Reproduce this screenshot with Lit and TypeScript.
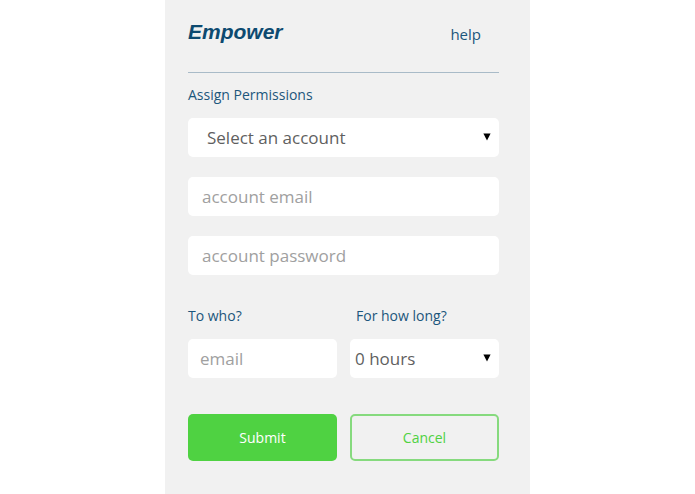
import { LitElement, html, css } from "lit";
import { customElement, state } from "lit/decorators.js";

const arrow = html`
    <svg class="arrow" viewBox="0 0 8 8" aria-hidden="true">
        <path d="M0.4 0.5h7.2L4 7.6z" fill="#000" />
    </svg>
`;

@customElement("app-root")
export class AppRoot extends LitElement {
    static styles = css`
        :host {
            display: block;
            min-height: 100vh;
            background: #fff;
            color: #1c567c;
            font-family: "Open Sans", "Noto Sans", sans-serif;
            font-size: 14px;
            line-height: 20px;
        }
        * {
            box-sizing: border-box;
        }
        .panel {
            max-width: 365px;
            min-height: 100vh;
            margin: 0 auto;
            padding: 19px 31px 32px 23px;
            background: #f1f1f1;
        }
        header {
            display: flex;
            align-items: center;
            justify-content: space-between;
            padding-bottom: 28px;
            border-bottom: 1px solid #a9bbc8;
        }
        h1 {
            margin: 0;
            color: #0d4a70;
            font: italic bold 21px/24px "Liberation Sans", Arial, sans-serif;
        }
        .help {
            padding: 5px 18px 0 0;
            color: inherit;
            font-size: 15px;
            text-decoration: none;
        }
        form {
            display: grid;
            grid-template-columns: 1fr 1fr;
            column-gap: 13px;
        }
        .wide {
            grid-column: 1 / -1;
        }
        label {
            display: block;
        }
        .title {
            padding: 12px 0 13px;
        }
        .field {
            padding: 0 0 13px;
        }
        .indent {
            padding-left: 6px;
        }
        .accounts {
            display: grid;
            gap: 20px;
            margin-bottom: 31px;
        }
        .select {
            display: flex;
            align-items: center;
            position: relative;
        }
        .arrow {
            position: absolute;
            right: 8px;
            width: 8px;
            height: 8px;
            margin-bottom: 1px;
            pointer-events: none;
        }
        input,
        select {
            display: block;
            width: 100%;
            height: 39px;
            margin: 0;
            border: 0;
            border-radius: 5px;
            background: #fff;
            color: #5f5f5f;
            font: inherit;
            font-size: 17px;
            appearance: none;
        }
        input {
            padding: 0 14px;
        }
        select {
            padding: 0 24px 0 5px;
        }
        .account {
            padding-left: 19px;
        }
        .receiver {
            padding-left: 12px;
        }
        input::placeholder {
            color: #a0a0a0;
            opacity: 1;
        }
        button {
            height: 47px;
            margin-top: 36px;
            padding: 0;
            border: 0;
            border-radius: 5px;
            background: #4fd242;
            color: #fff;
            font: inherit;
            cursor: pointer;
        }
        .cancel {
            border: 2px solid #86da7e;
            background: transparent;
            color: #4fd242;
        }
    `;

    @state() private account = "";
    @state() private hours = "0";

    private onSubmit(e: Event) {
        e.preventDefault();
    }

    private onReset() {
        this.account = "";
        this.hours = "0";
    }

    render() {
        return html`
            <main class="panel">
                <header>
                    <h1>Empower</h1>
                    <a class="help" href="#help">help</a>
                </header>
                <form @submit=${this.onSubmit} @reset=${this.onReset}>
                    <label class="wide title" for="account">Assign Permissions</label>
                    <div class="wide accounts">
                        <div class="select">
                            <select
                                id="account"
                                class="account"
                                .value=${this.account}
                                @change=${(e: Event) => (this.account = (e.target as HTMLSelectElement).value)}
                            >
                                <option value="">Select an account</option>
                            </select>
                            ${arrow}
                        </div>
                        <input type="email" aria-label="account email" placeholder="account email" />
                        <input type="password" aria-label="account password" placeholder="account password" />
                    </div>
                    <label class="field" for="receiver">To who?</label>
                    <label class="field indent" for="hours">For how long?</label>
                    <input id="receiver" class="receiver" type="email" placeholder="email" />
                    <div class="select">
                        <select
                            id="hours"
                            .value=${this.hours}
                            @change=${(e: Event) => (this.hours = (e.target as HTMLSelectElement).value)}
                        >
                            <option value="0">0 hours</option>
                        </select>
                        ${arrow}
                    </div>
                    <button type="submit">Submit</button>
                    <button class="cancel" type="reset">Cancel</button>
                </form>
            </main>
        `;
    }
}
